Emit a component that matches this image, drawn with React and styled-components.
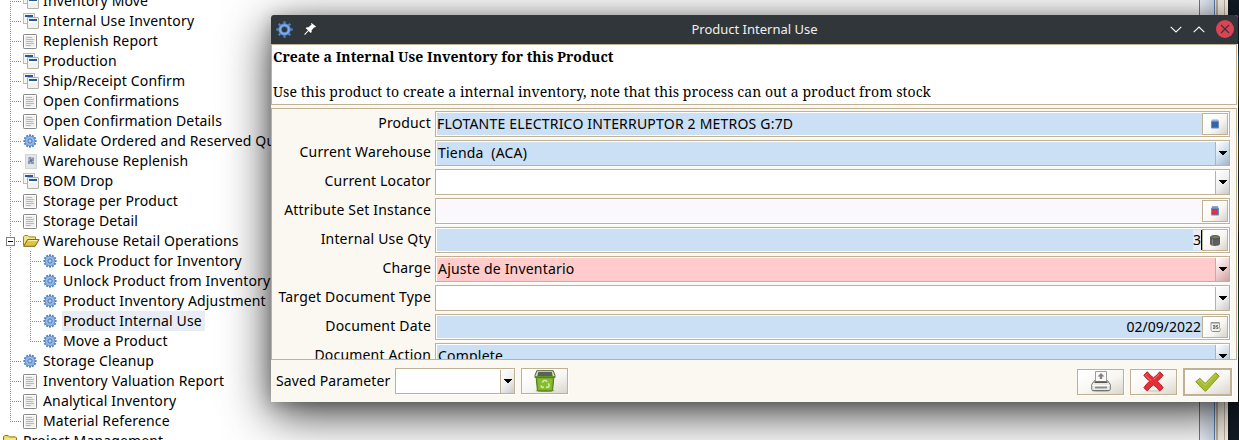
import React from "react";
import styled, { createGlobalStyle, css } from "styled-components";

const line = "#bfb294";
const cream = "#fbf8f1";
const sky = "#cbe0f5";

const GlobalStyle = createGlobalStyle`
  * { box-sizing: border-box; }
  body { margin: 0; overflow: hidden; font: 14px/20px "Noto Sans", sans-serif; letter-spacing: 0.15px; color: #000; }
  svg { display: block; flex: none; }
`;

const Desktop = styled.div`
  position: relative;
  display: flex;
  width: 1239px;
  height: 440px;
  overflow: hidden;
  background: #fff;
`;
const Tree = styled.div`
  flex: none;
  width: 1199px;
  padding-left: 3px;
  margin-top: -9px;
`;
const TreeRow = styled.div`
  display: flex;
  height: 20px;
`;
const dotsX = "repeating-linear-gradient(to right, #8c8c8c 0 1px, transparent 1px 2px)";
const dotsY = "repeating-linear-gradient(to bottom, #8c8c8c 0 1px, transparent 1px 2px)";
const Guide = styled.div`
  flex: none;
  display: flex;
  align-items: center;
  width: 20px;
  padding-left: 3px;
  background-repeat: no-repeat;
  background-image: ${dotsY}, ${dotsX};
  background-position: 7px 0, 7px 10px;
  background-size: 1px ${(p) => (p.$end ? "10px" : "20px")}, ${(p) => (p.$through ? "0 0" : "12px 1px")};
`;
const Expander = styled.span`
  display: flex;
  align-items: center;
  justify-content: center;
  width: 9px;
  height: 9px;
  margin-top: 1px;
  border: 1px solid #808080;
  background: #fff;
  &::after { content: ""; width: 5px; height: 1px; background: #000; }
`;
const IconCell = styled.span`
  flex: none;
  display: flex;
  align-items: center;
  width: 19px;
`;
const TreeText = styled.span`
  padding: 0 3px 0 1px;
  line-height: 19px;
  white-space: nowrap;
  background: ${(p) => (p.$selected ? "#e8edf5" : "transparent")};
`;

const ScrollTrack = styled.div`
  width: 16px;
  border: solid #5b7fb0;
  border-width: 0 1px;
  background: linear-gradient(to right, #f2f6fd, #cfd9ea);
`;
const WindowEdge = styled.div`
  width: 13px;
  background: linear-gradient(to right, #eee9df 1px, #bfb294 1px 3px, #f4efe6 3px 9px, #bfb294 9px 10px, #f8f4ec 10px);
`;
const Wallpaper = styled.div`
  flex: 1;
  background: linear-gradient(#111a24 0 50px, #1b6ea5 58px, #7f6a10 70px 95px, #0c151d 110px 128px, #155f91 136px, #6f5a12 150px, #17324b 180px, #796319 215px, #0c1822 240px, #27703e 340px, #142b3e 360px, #111a24 400px);
`;

const Dialog = styled.section`
  position: absolute;
  left: 271px;
  top: 15px;
  display: flex;
  flex-direction: column;
  width: 967px;
  height: 387px;
  border-radius: 3px 3px 0 0;
  background: ${cream};
  box-shadow: 0 12px 48px rgba(0, 0, 0, 0.76), 0 3px 16px rgba(0, 0, 0, 0.22);
`;
const TitleBar = styled.header`
  display: grid;
  grid-template-columns: 70px 1fr 70px;
  align-items: center;
  height: 29px;
  flex: none;
  border-radius: 3px 3px 0 0;
  background: #31363b;
  color: #eff0f1;
  font-size: 13px;
  letter-spacing: 0;
  text-align: center;
`;
const Title = styled.span`
  padding-bottom: 2px;
`;
const TitleIcons = styled.div`
  display: flex;
  align-items: center;
  gap: ${(p) => p.$gap}px;
  padding-left: ${(p) => p.$pad}px;
  padding-bottom: 1px;
`;
const Description = styled.div`
  flex: none;
  width: 966px;
  height: 61px;
  margin-bottom: 3px;
  padding: 3px 1px;
  border: 1px solid ${line};
  background: #fff;
  font: 14px/18px "Noto Serif", "Droid Serif", "DejaVu Serif", serif;
  white-space: nowrap;
`;
const Heading = styled.div`
  font-weight: bold;
  letter-spacing: 0.02px;
  margin-bottom: 17px;
`;
const Note = styled.div`
  letter-spacing: 0.065px;
`;
const Form = styled.div`
  flex: none;
  width: 966px;
  height: 252px;
  padding-top: 2px;
  overflow: hidden;
  border: 1px solid ${line};
`;
const FieldRow = styled.label`
  display: grid;
  grid-template-columns: 159px 795px;
  column-gap: 4px;
  height: 29px;
`;
const Caption = styled.span`
  padding-top: 2px;
  letter-spacing: 0.18px;
  text-align: right;
  white-space: nowrap;
`;
const Field = styled.div`
  display: flex;
  width: ${(p) => p.$width || 795}px;
  height: 26px;
  padding: ${(p) => (p.$combo ? "1px 0 0 1px" : "1px")};
  border: 1px solid ${line};
  background: linear-gradient(${(p) => p.$fill}, ${(p) => p.$fill}) content-box, #fff;
  box-shadow: 1px 1px 0 #fff;
`;
const Value = styled.span`
  flex: 1;
  padding: 0 ${(p) => (p.$date ? 1 : 0)}px 0 ${(p) => (p.$combo ? 1 : 0)}px;
  letter-spacing: ${(p) => (p.$right ? 0 : 0.2)}px;
  line-height: 22px;
  text-align: ${(p) => (p.$right ? "right" : "left")};
  white-space: pre;
`;
const Typed = styled.span`
  display: inline-block;
  height: 20px;
  line-height: 20px;
  background: #e8edf5;
  border-right: 1px solid #000;
`;
const FieldButton = styled.span`
  display: flex;
  align-items: center;
  justify-content: center;
  width: 26px;
  height: 22px;
  border: 1px solid ${line};
  background: linear-gradient(135deg, #fff 20%, #f7f5f1 60%, #d6d2ca);
  box-shadow: inset 1px 1px #fff;
`;
const Arrow = styled.span`
  display: flex;
  align-items: center;
  justify-content: center;
  width: 14px;
  padding-bottom: 1px;
  border-left: 1px solid ${line};
  background: linear-gradient(135deg, #fff, ${(p) => p.$mid} 55%, ${(p) => p.$dark});
`;
const Footer = styled.footer`
  display: flex;
  align-items: center;
  height: 42px;
  padding: 0 6px 0 5px;
`;
const FooterLabel = styled.span`
  width: 119px;
  margin-top: -1px;
`;
const Button = styled.button`
  display: flex;
  align-items: center;
  justify-content: center;
  width: 47px;
  height: 26px;
  padding: 0;
  border: 1px solid ${line};
  background: linear-gradient(155deg, #fff 15%, #f8f6f2 55%, #dad6ce);
  box-shadow: 1px 1px 0 #fff;
  ${(p) => p.$main && css`width: 49px; height: 28px; border-width: 2px;`}
`;
const ActionGroup = styled.div`
  display: flex;
  align-items: center;
  gap: 6px;
  margin: 1px 0 0 auto;
`;
const TrashSlot = styled.div`
  margin-left: 6px;
`;

const Gear = () => (
  <svg width="14" height="14" viewBox="0 0 14 14">
    <g stroke="#4a7fc4" strokeWidth="2.1">
      {[0, 30, 60, 90, 120, 150].map((a) => (
        <path key={a} d="M7 .4V13.6" transform={`rotate(${a} 7 7)`} />
      ))}
    </g>
    <circle cx="7" cy="7" r="4.8" fill="#98b9e3" stroke="#6b97d1" strokeWidth=".8" />
    <circle cx="7" cy="7" r="2.1" fill="#b9cfec" stroke="#4475b7" strokeWidth="1" />
  </svg>
);
const TitleGear = () => (
  <svg width="17" height="17" viewBox="0 0 17 17">
    <g stroke="#4f81c4" strokeWidth="2.3">
      {[0, 45, 90, 135].map((a) => (
        <path key={a} d="M8.5 .3V3.6M8.5 13.4V16.7" transform={`rotate(${a} 8.5 8.5)`} />
      ))}
    </g>
    <circle cx="8.5" cy="8.5" r="4.4" fill="none" stroke="#4f81c4" strokeWidth="3.6" />
    <circle cx="8.5" cy="8.5" r="4.4" fill="none" stroke="#86aee2" strokeWidth="1.9" />
  </svg>
);
const WindowIcon = () => (
  <svg width="16" height="16" viewBox="0 0 16 16">
    <rect x=".5" y=".5" width="11" height="10" fill="#f3f3f1" stroke="#babdb6" />
    <rect x="2" y="2" width="8" height="2" fill="#2457a0" />
    <rect x="4.5" y="4.5" width="11" height="11" rx=".5" fill="#f1f1ef" stroke="#aeb1aa" />
    <rect x="6" y="6" width="8" height="2" fill="#2457a0" />
    <rect x="6" y="8" width="8" height="2" fill="#fff" />
  </svg>
);
const ReportIcon = () => (
  <svg width="14" height="15" viewBox="0 0 14 15">
    <rect x=".5" y=".5" width="13" height="14" rx=".7" fill="#fff" stroke="#868886" />
    <rect x="2" y="2" width="10" height="11" fill="#eeeeec" />
    <path d="M3 3.5h6M3 5.5h8M3 7.5h7M3 9.5h8M3 11.5h5" stroke="#b9bbb7" />
  </svg>
);
const WorkflowIcon = () => (
  <svg width="16" height="15" viewBox="0 0 16 15">
    <rect x="2.5" y=".5" width="11" height="14" fill="#e4e5e6" stroke="#d2d3d4" />
    <path d="M5 3h6v7H5z" fill="#b3bdd0" />
    <path d="M6 3h2v2H6zM9 4h2v3H9zM5 7h2v3H5zM8 8h3v2H8z" fill="#8796b5" />
    <circle cx="8" cy="6.5" r="1.5" fill="#65769b" />
  </svg>
);
const FolderIcon = () => (
  <svg width="17" height="12" viewBox="0 0 17 12">
    <path d="M.5 10.5V1.8L1.8.5h3l1.4 1.4h6.3V5" fill="#f3e688" stroke="#96841b" />
    <path d="M.7 11.3 4.5 4.6h11.6l-4 6.7z" fill="#dfc145" stroke="#766413" />
    <path d="M5.1 5.6h9.4" stroke="#fff5a9" />
  </svg>
);
const ClosedFolderIcon = () => (
  <svg width="14" height="12" viewBox="0 0 14 12">
    <path d="M.5 11.5V1.8L1.8.5h3.4l1.3 1.4h6l1 1v8.6z" fill="#ecd764" stroke="#8a7715" />
    <path d="M1.5 4h11" stroke="#fff4a6" />
  </svg>
);
const ArrowGlyph = () => (
  <svg width="8" height="4" viewBox="0 0 8 4" shapeRendering="crispEdges">
    <path d="M0 0h8v1H0zM1 1h6v1H1zM2 2h4v1H2zM3 3h2v1H3z" />
  </svg>
);
const PinIcon = () => (
  <svg width="12" height="12" viewBox="0 0 12 12">
    <path d="M7.5 0 12 3.6l-1 .9-.7-.2-2.7 3 .1 1.8-1 .9L4.6 8 1.2 11.8.3 11.7.4 11 4 7.3 1.7 5.2l1-1 1.8.1 3.1-2.8L7 .7z" fill="#fff" />
  </svg>
);
const Chevron = ({ up }) => (
  <svg width="12" height="7" viewBox="0 0 12 7">
    <path d={up ? "M.7 6.2 6 1l5.3 5.2" : "M.7.8 6 6 11.3.8"} fill="none" stroke="#fcfcfc" strokeWidth="1.1" />
  </svg>
);
const CloseIcon = () => (
  <svg width="18" height="18" viewBox="0 0 18 18">
    <circle cx="9" cy="9" r="9" fill="#da4453" />
    <path d="m5 5 8 8M13 5l-8 8" stroke="#31363b" strokeWidth="1.1" />
  </svg>
);
const ProductGlyph = ({ red }) => (
  <svg width="8" height="10" viewBox="0 0 8 10">
    <rect x="1" y="0" width="6" height="2" fill={red ? "#8fa8cf" : "#c4d3e6"} />
    <rect x="0" y="1.5" width="8" height="8" rx="1" fill="#5f8dc5" />
    <rect x="1" y="3" width="6" height="5.5" fill={red ? "#dc2f45" : "#3465a4"} />
    {red && <path d="M1 5.5h6" stroke="#5571ad" />}
  </svg>
);
const DrumGlyph = () => (
  <svg width="10" height="11" viewBox="0 0 10 11">
    <path d="M0 2v7c0 2.5 10 2.5 10 0V2z" fill="#5d5f5a" />
    <path d="M2.5 4v6" stroke="#888a85" />
    <ellipse cx="5" cy="2.2" rx="4.6" ry="1.8" fill="#777a68" stroke="#474944" strokeWidth=".8" />
  </svg>
);
const CalendarGlyph = () => (
  <svg width="11" height="10" viewBox="0 0 11 10">
    <path d="M1 .5h8.5v5l1 2-1 2H2L1 8z" fill="#f1f1ef" stroke="#a1a39e" />
    <path d="M1 1h8M3 9.5h6" stroke="#888a85" />
    <path d="M3 3.5h2v3H3M3 5h2M8 3.5H6.5V5H8v1.5H6.3" fill="none" stroke="#62645f" strokeWidth=".9" />
  </svg>
);
const TrashIcon = () => (
  <svg width="22" height="22" viewBox="0 0 22 22">
    <ellipse cx="11" cy="20.7" rx="9.5" ry="1.2" fill="#aaa79f" />
    <path d="M2 6h18l-1.4 14.2q-.1.8-1 .8H4.4q-.9 0-1-.8z" fill="#79ad25" stroke="#4c7d12" />
    <path d="M4 9h14l-.8 10.5H4.8z" fill="#89bd31" />
    <path d="M2.8.7h16.4L21 5.5v2H1v-2z" fill="#d7ddd0" stroke="#4c6a29" />
    <path d="M4.2 2h13.6l1 4.2H3.2z" fill="#5b605b" />
    <path d="M1 6.9h20" stroke="#5d8d20" strokeWidth="1.6" />
    <g fill="none" stroke="#d3e8ac" strokeWidth="1.5">
      <path d="m8.2 12.6 1.7-2h2l1.1 1.6" />
      <path d="m14.3 13.4 1 2-1 1.8H12" />
      <path d="M10 17.2H7.8l-1-1.7" />
    </g>
  </svg>
);
const PrinterIcon = () => (
  <svg width="20" height="21" viewBox="0 0 20 21">
    <ellipse cx="10" cy="19.8" rx="9" ry="1.2" fill="#bbb8b2" />
    <path d="M3.5 9.5h13l2.8 4v4.8q0 1.2-1.2 1.2H1.9q-1.2 0-1.2-1.2v-4.8z" fill="#e8e8e6" stroke="#747671" />
    <path d="M4.5.5h11v10h-11z" fill="#fafafa" stroke="#9b9d98" />
    <path d="M10 2 6.5 5.5h2.3V8h2.4V5.5h2.3z" fill="#81837e" />
    <path d="M3.5 11.2h13" stroke="#555753" strokeWidth="1.6" />
    <path d="M1.5 14.5h17" stroke="#fff" />
    <path d="M4 16.5h12" stroke="#888a85" strokeWidth="1.8" />
  </svg>
);
const CancelIcon = () => (
  <svg width="21" height="21" viewBox="0 0 21 21">
    <ellipse cx="10.5" cy="20" rx="7" ry="1" fill="#d8d4ce" />
    <path d="M4.4.8.8 4.3q2.5 3.5 6 5.8Q3.1 13 .9 16.7l3.4 3.4q2.4-3.8 6.2-6.2 3.7 2.5 6.2 6.2l3.5-3.4q-2.5-3.9-6.1-6.5 3.6-2.4 6.1-6L16.7.8q-2.5 3.6-6.2 6Q6.9 4.5 4.4.8z" fill="#e23036" stroke="#b52429" />
    <path d="M4.5 2.6 2.7 4.4q2.4 2.8 5.6 5.2M16.5 2.5q-2.7 3.7-6 5.8" fill="none" stroke="#f57575" />
  </svg>
);
const OkIcon = () => (
  <svg width="25" height="20" viewBox="0 0 25 20">
    <path d="m.8 9.7 4-3.4 5.4 5.2L20.7.8l3.5 3.4L11 18.9q-.8.6-1.6-.2z" fill="#a9bd31" stroke="#84991e" />
    <path d="m2.5 9.8 2.3-2 5.4 5.3L20.6 2.5" fill="none" stroke="#c2d360" />
  </svg>
);

const icons = { w: WindowIcon, r: ReportIcon, g: Gear, f: WorkflowIcon, o: FolderIcon, c: ClosedFolderIcon };
const tree = [
  ["w", "Inventory Move"],
  ["w", "Internal Use Inventory"],
  ["r", "Replenish Report"],
  ["w", "Production"],
  ["w", "Ship/Receipt Confirm"],
  ["r", "Open Confirmations"],
  ["r", "Open Confirmation Details"],
  ["g", "Validate Ordered and Reserved Quantity"],
  ["f", "Warehouse Replenish"],
  ["w", "BOM Drop"],
  ["r", "Storage per Product"],
  ["r", "Storage Detail"],
  ["o", "Warehouse Retail Operations"],
  ["g", "Lock Product for Inventory", 2],
  ["g", "Unlock Product from Inventory", 2],
  ["g", "Product Inventory Adjustment", 2],
  ["g", "Product Internal Use", 2],
  ["g", "Move a Product", 2, true],
  ["g", "Storage Cleanup"],
  ["r", "Inventory Valuation Report"],
  ["r", "Analytical Inventory"],
  ["r", "Material Reference", 1, true],
  ["c", "Project Management", 0],
];

const fields = [
  { label: "Product", value: "FLOTANTE ELECTRICO INTERRUPTOR 2 METROS G:7D", fill: sky, glyph: <ProductGlyph /> },
  { label: "Current Warehouse", value: "Tienda  (ACA)", fill: sky, combo: ["#cbdbea", "#9eb4cb"] },
  { label: "Current Locator", value: "", fill: "#fff", combo: ["#eeeeee", "#c9c9c9"] },
  { label: "Attribute Set Instance", value: "", fill: "#faf8fc", glyph: <ProductGlyph red /> },
  { label: "Internal Use Qty", value: <Typed>3</Typed>, right: true, fill: sky, glyph: <DrumGlyph /> },
  { label: "Charge", value: "Ajuste de Inventario", fill: "#ffcbcb", combo: ["#eccaca", "#ce9f9f"] },
  { label: "Target Document Type", value: "", fill: "#fff", combo: ["#eeeeee", "#c9c9c9"] },
  { label: "Document Date", value: "02/09/2022", right: true, date: true, fill: sky, glyph: <CalendarGlyph /> },
  { label: "Document Action", value: "Complete", fill: sky, combo: ["#cbdbea", "#9eb4cb"] },
];

export default function App() {
  return (
    <Desktop>
      <GlobalStyle />
      <Tree>
        {tree.map(([kind, text, level = 1, end]) => {
          const Icon = icons[kind];
          return (
            <TreeRow key={text}>
              {level === 2 && <Guide $through />}
              {level > 0 && <Guide $end={end}>{kind === "o" && <Expander />}</Guide>}
              <IconCell><Icon /></IconCell>
              <TreeText $selected={text === "Product Internal Use"}>{text}</TreeText>
            </TreeRow>
          );
        })}
      </Tree>
      <ScrollTrack />
      <WindowEdge />
      <Wallpaper />
      <Dialog>
        <TitleBar>
          <TitleIcons $gap={11} $pad={5}><TitleGear /><PinIcon /></TitleIcons>
          <Title>Product Internal Use</Title>
          <TitleIcons $gap={11} $pad={2}><Chevron /><Chevron up /><CloseIcon /></TitleIcons>
        </TitleBar>
        <Description>
          <Heading>Create a Internal Use Inventory for this Product</Heading>
          <Note>Use this product to create a internal inventory, note that this process can out a product from stock</Note>
        </Description>
        <Form>
          {fields.map((f) => (
            <FieldRow key={f.label}>
              <Caption>{f.label}</Caption>
              <Field $fill={f.fill} $combo={!!f.combo}>
                <Value $right={f.right} $date={f.date} $combo={!!f.combo}>{f.value}</Value>
                {f.combo
                  ? <Arrow $mid={f.combo[0]} $dark={f.combo[1]}><ArrowGlyph /></Arrow>
                  : <FieldButton>{f.glyph}</FieldButton>}
              </Field>
            </FieldRow>
          ))}
        </Form>
        <Footer>
          <FooterLabel>Saved Parameter</FooterLabel>
          <Field $fill="#fff" $combo $width={120}>
            <Value />
            <Arrow $mid="#eeeeee" $dark="#c9c9c9"><ArrowGlyph /></Arrow>
          </Field>
          <TrashSlot><Button><TrashIcon /></Button></TrashSlot>
          <ActionGroup>
            <Button><PrinterIcon /></Button>
            <Button><CancelIcon /></Button>
            <Button $main><OkIcon /></Button>
          </ActionGroup>
        </Footer>
      </Dialog>
    </Desktop>
  );
}
